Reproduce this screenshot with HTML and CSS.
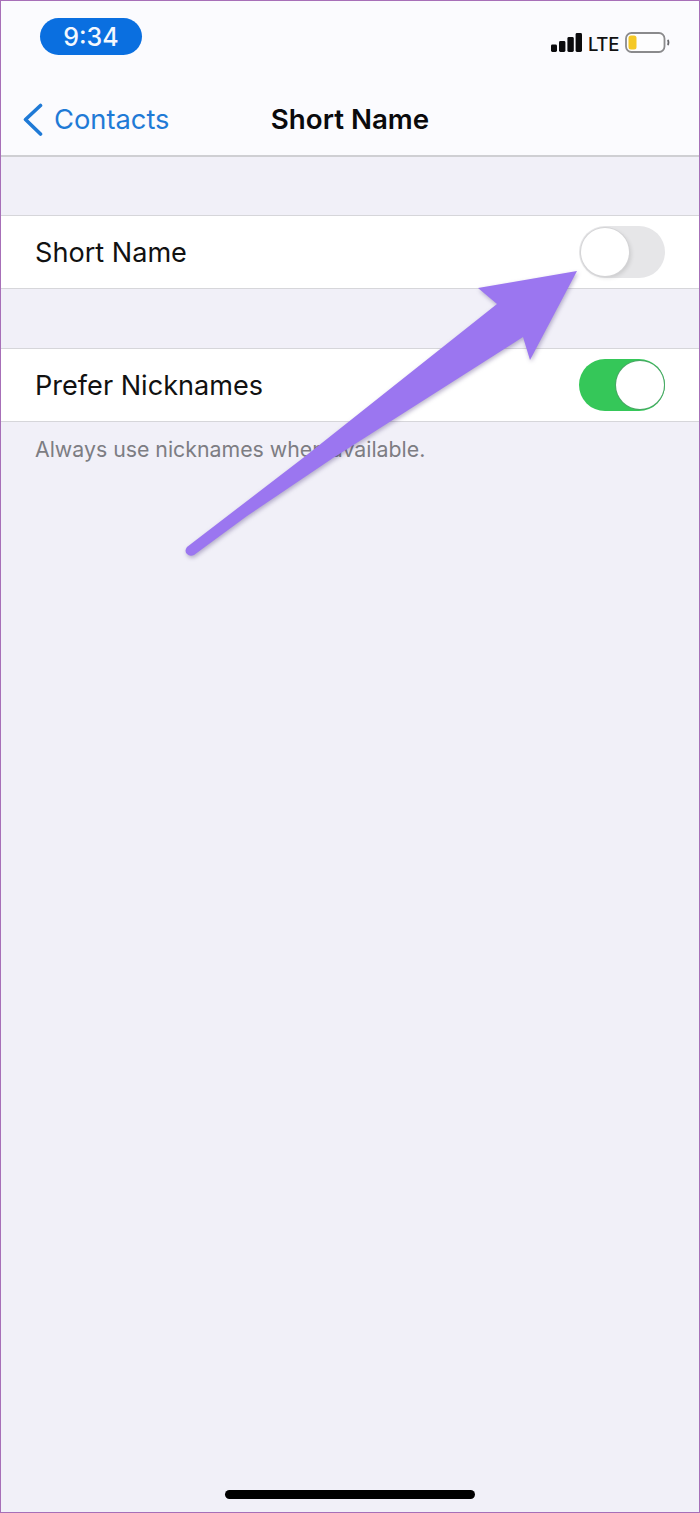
FILE: index.html
```html
<!DOCTYPE html>
<html lang="en">
<head>
    <meta charset="UTF-8">
    <meta name="viewport" content="width=700">
    <title>Short Name</title>
    <link rel="stylesheet" href="styles.css">
</head>
<body>
    <div class="phone">
        <header class="top">
            <div class="status">
                <span class="time">9:34</span>
                <div class="status-right">
                    <svg class="signal" width="31" height="19" viewBox="0 0 31 19">
                        <rect x="0" y="11.5" width="6" height="7.5" rx="1.4"/>
                        <rect x="8" y="8" width="6.4" height="11" rx="1.4"/>
                        <rect x="16.4" y="4" width="6.4" height="15" rx="1.4"/>
                        <rect x="24.6" y="0" width="6.4" height="19" rx="1.4"/>
                    </svg>
                    <span class="lte">LTE</span>
                    <svg class="battery" width="45" height="21" viewBox="0 0 45 21">
                        <rect x="1" y="1" width="38.5" height="19" rx="5.5" fill="#fdfdfe" stroke="#8a8a8c" stroke-width="1.8"/>
                        <rect x="3.5" y="3.5" width="8" height="14" rx="2.5" fill="#f5c825"/>
                        <path d="M42.6 8 C43.8 9 43.8 12 42.6 13" fill="none" stroke="#66666a" stroke-width="1.8"/>
                    </svg>
                </div>
            </div>
            <nav class="nav">
                <a class="back">
                    <svg width="22" height="33" viewBox="0 0 22 33">
                        <path d="M18.5 2.5 L3.5 16.5 L18.5 31" fill="none" stroke="#1f7ad6" stroke-width="3.6" stroke-linecap="round" stroke-linejoin="round"/>
                    </svg>
                    <span>Contacts</span>
                </a>
                <h1>Short Name</h1>
            </nav>
        </header>

        <main class="content">
            <div class="row">
                <span>Short Name</span>
                <div class="toggle"><div class="knob"></div></div>
            </div>
            <div class="row row-second">
                <span>Prefer Nicknames</span>
                <div class="toggle toggle-on"><div class="knob"></div></div>
            </div>
            <p class="hint">Always use nicknames when available.</p>
        </main>

        <div class="home-bar"></div>

        <svg class="arrow" width="700" height="1513" viewBox="0 0 700 1513">
            <path d="M577 271 L478 288 L497 304 L303 458 L187 547 Q184 551 187 554 Q190 557 194 555 L247 516 L333 458 L523 337 L530 360 Z" fill="#9b76f0"/>
        </svg>
    </div>
</body>
</html>
```

FILE: styles.css
```css
html, body {
    margin: 0;
    padding: 0;
}
body {
    font-family: 'Inter', 'Liberation Sans', sans-serif;
    background-color: #f1f0f8;
}
.phone {
    position: relative;
    display: flex;
    flex-direction: column;
    height: 1513px;
    box-sizing: border-box;
    border: 1px solid #a76fb8;
    background-color: #f1f0f8;
    overflow: hidden;
}
.top {
    height: 156px;
    box-sizing: border-box;
    background-color: #fbfbfe;
    border-bottom: 2px solid #cfcfd3;
}
.status {
    display: flex;
    justify-content: space-between;
    align-items: flex-start;
    padding: 17px 29px 0 39px;
}
.time {
    width: 102px;
    height: 37px;
    line-height: 39px;
    border-radius: 19px;
    background-color: #0a6fe0;
    color: #f4f8fe;
    font-size: 25px;
    font-weight: 500;
    text-align: center;
}
.status-right {
    display: flex;
    align-items: center;
    gap: 6px;
    height: 21px;
    margin-top: 14px;
}
.signal {
    fill: #0b0b0d;
}
.lte {
    font-size: 18.5px;
    font-weight: 500;
    letter-spacing: -0.3px;
    color: #111;
    margin-top: 2px;
}
.nav {
    position: relative;
    display: flex;
    align-items: center;
    justify-content: center;
    height: 40px;
    margin-top: 44px;
}
.back {
    position: absolute;
    left: 21px;
    top: 4px;
    display: flex;
    align-items: center;
    gap: 10px;
    color: #1f7ad6;
    font-size: 27.3px;
}
.nav h1 {
    margin: 0;
    font-size: 27.7px;
    font-weight: 600;
    color: #0a0a0c;
}
.content {
    padding-top: 58px;
}
.row {
    display: flex;
    justify-content: space-between;
    align-items: center;
    height: 72px;
    padding: 0 34px;
    background-color: #fff;
    border-top: 1px solid #d6d6da;
    border-bottom: 1px solid #d6d6da;
    font-size: 27.1px;
    color: #111;
}
.row-second {
    margin-top: 59px;
}
.toggle {
    display: flex;
    width: 86px;
    height: 52px;
    box-sizing: border-box;
    padding: 2px;
    border-radius: 26px;
    background-color: #e6e6e8;
}
.toggle-on {
    justify-content: flex-end;
    background-color: #35c759;
    padding-right: 1px;
}
.knob {
    width: 48px;
    height: 48px;
    border-radius: 50%;
    background-color: #fff;
    box-shadow: 0 0 0 1px #d4d4d6, 2px 2px 4px rgba(0, 0, 0, 0.12);
}
.toggle-on .knob {
    box-shadow: 0 0 0 1px #4aa565;
}
.hint {
    margin: 14px 0 0 34px;
    font-size: 21.3px;
    color: #7d7d83;
}
.home-bar {
    width: 250px;
    height: 9px;
    margin: auto auto 13px;
    border-radius: 5px;
    background-color: #000;
}
.arrow {
    position: absolute;
    left: -1px;
    top: -1px;
    filter: drop-shadow(1px 2px 2px rgba(60, 40, 110, 0.35));
}
```
